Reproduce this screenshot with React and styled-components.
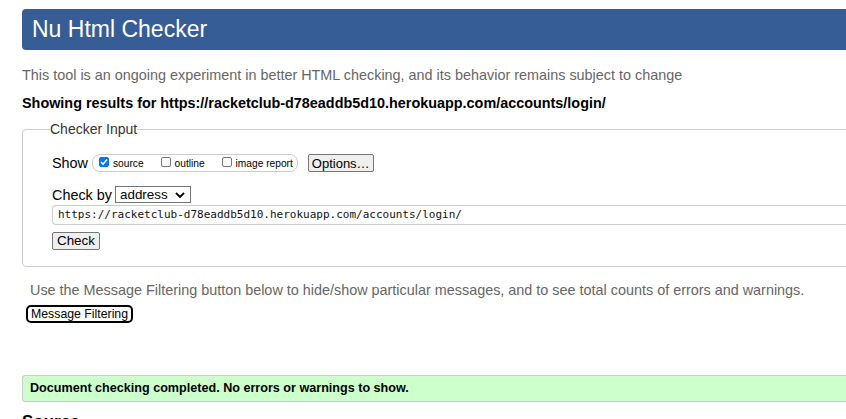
import React from 'react';
import styled, { createGlobalStyle } from 'styled-components';

const GlobalStyle = createGlobalStyle`
  html, body {
    margin: 0;
    padding: 0;
    background: #fff;
    overflow: hidden;
  }
  body {
    font-family: "Liberation Sans", Arial, sans-serif;
    color: #000;
  }
`;

const Page = styled.div`
  width: 900px;
  padding: 9px 0 0 22px;
`;

const Header = styled.h1`
  margin: 0;
  height: 41px;
  background: #365d95;
  border-radius: 4px 0 0 4px;
  color: #fff;
  font-size: 23px;
  font-weight: normal;
  line-height: 41px;
  padding-left: 10px;
`;

const Intro = styled.p`
  margin: 16px 0 0;
  font-size: 14.4px;
  color: #666;
  line-height: 18px;
`;

const ResultsFor = styled.p`
  margin: 10px 0 0;
  font-size: 14.4px;
  font-weight: bold;
  line-height: 18px;
`;

const Fieldset = styled.fieldset`
  margin: 9px 0 0;
  padding: 7px 0 16px 29px;
  border: 1px solid #ccc;
  border-radius: 4px 0 0 4px;
`;

const Legend = styled.legend`
  margin-left: -2px;
  padding: 0;
  font-size: 14px;
  color: #333;
`;

const Row = styled.div`
  display: flex;
  align-items: center;
  gap: ${p => p.$gap || 4}px;
  margin-top: ${p => p.$top || 0}px;
  font-size: 14.4px;
`;

const Group = styled.div`
  display: flex;
  align-items: center;
  height: 16px;
  padding: 0 4px 0 6px;
  border: 1px solid #ccc;
  border-radius: 8px;
`;

const Check = styled.label`
  display: flex;
  align-items: center;
  gap: 4px;
  font-size: 10.2px;
  margin-right: ${p => p.$space || 0}px;
`;

const Box = styled.span`
  width: 10px;
  height: 10px;
  margin-top: -3px;
  border-radius: 2px;
  box-sizing: border-box;
  border: 1px solid ${p => (p.$on ? '#0075ff' : '#767676')};
  background: ${p => (p.$on ? '#0075ff' : '#fff')};
  display: flex;
  align-items: center;
  justify-content: center;
`;

const Button = styled.button`
  font-family: "Liberation Sans", Arial, sans-serif;
  font-size: ${p => p.$size || 13}px;
  height: ${p => p.$h || 18}px;
  padding: 0 ${p => p.$pad || 6}px;
  background: #efefef;
  color: #000;
  border: 1px solid #767676;
  border-radius: 2px;
  line-height: 1;
`;

const FilterButton = styled(Button)`
  background: #fff;
  border: 2px solid #000;
  border-radius: 5px;
  padding: 0 3px;
  font-size: 12.3px;
`;

const Select = styled.div`
  display: flex;
  align-items: center;
  justify-content: space-between;
  box-sizing: border-box;
  width: 76px;
  height: 17px;
  padding: 0 5px 0 4px;
  border: 1px solid #767676;
  font-size: 13.4px;
`;

const UrlInput = styled.div`
  margin-top: 2px;
  height: 20px;
  box-sizing: border-box;
  border: 1px solid #ccc;
  border-right: none;
  border-radius: 4px 0 0 4px;
  padding-left: 5px;
  font-family: "DejaVu Sans Mono", "Liberation Mono", monospace;
  font-size: 11px;
  line-height: 18px;
  color: #111;
`;

const Notice = styled.p`
  margin: 14px 0 0 8px;
  font-size: 14.4px;
  color: #666;
  line-height: 18px;
`;

const Success = styled.p`
  margin: 52px 0 0;
  height: 27px;
  box-sizing: border-box;
  background: #ccffcc;
  border: 1px solid #ccc;
  border-right: none;
  border-radius: 3px 0 0 3px;
  padding-left: 7px;
  font-size: 12.6px;
  font-weight: bold;
  line-height: 25px;
`;

const SourceTitle = styled.h2`
  margin: 10px 0 0;
  font-size: 17px;
  font-weight: bold;
`;

const Tick = () => (
  <svg width="8" height="8" viewBox="0 0 8 8">
    <path d="M1 4.2 L3.1 6.2 L7 1.6" stroke="#fff" strokeWidth="1.6" fill="none" />
  </svg>
);

export default function App() {
  return (
    <Page>
      <GlobalStyle />
      <Header>Nu Html Checker</Header>
      <Intro>This tool is an ongoing experiment in better HTML checking, and its behavior remains subject to change</Intro>
      <ResultsFor>Showing results for https://racketclub-d78eaddb5d10.herokuapp.com/accounts/login/</ResultsFor>

      <Fieldset>
        <Legend>Checker Input</Legend>
        <Row $top={10} $gap={4}>
          <span>Show</span>
          <Group>
            <Check $space={17}><Box $on><Tick /></Box>source</Check>
            <Check $space={17}><Box />outline</Check>
            <Check><Box />image report</Check>
          </Group>
          <Button $size={13} $pad={3} style={{ marginLeft: 6 }}>Options…</Button>
        </Row>
        <Row $top={14} $gap={3}>
          <span>Check by</span>
          <Select>
            <span>address</span>
            <svg width="10" height="6" viewBox="0 0 10 6">
              <path d="M1 1 L5 5 L9 1" stroke="#000" strokeWidth="1.8" fill="none" />
            </svg>
          </Select>
        </Row>
        <UrlInput>https://racketclub-d78eaddb5d10.herokuapp.com/accounts/login/</UrlInput>
        <Row $top={7}>
          <Button $size={13.4} $pad={4}>Check</Button>
        </Row>
      </Fieldset>

      <Notice>Use the Message Filtering button below to hide/show particular messages, and to see total counts of errors and warnings.</Notice>
      <Row $top={6} style={{ marginLeft: 4 }}>
        <FilterButton>Message Filtering</FilterButton>
      </Row>

      <Success>Document checking completed. No errors or warnings to show.</Success>
      <SourceTitle>Source</SourceTitle>
    </Page>
  );
}
